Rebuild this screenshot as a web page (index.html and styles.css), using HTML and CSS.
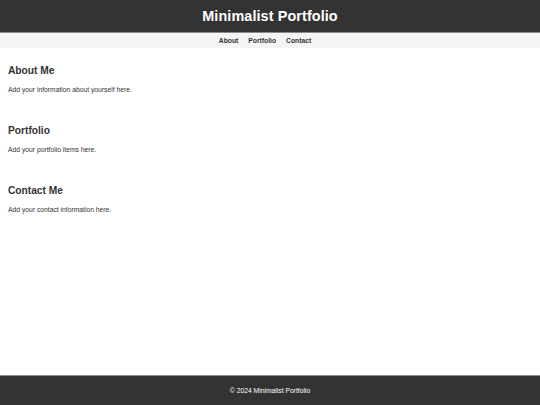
FILE: index.html
```html
<!DOCTYPE html>
<html lang="en">
<head>
<meta charset="utf-8">
<title>Minimalist Portfolio</title>
<link rel="stylesheet" href="styles.css">
</head>
<body>
<div class="page">
  <header class="site-header">
    <h1 class="site-title">Minimalist Portfolio</h1>
  </header>
  <nav class="site-nav">
    <a href="#about">About</a>
    <a href="#portfolio">Portfolio</a>
    <a href="#contact">Contact</a>
  </nav>
  <main class="content">
    <section class="block" id="about">
      <h2>About Me</h2>
      <p>Add your information about yourself here.</p>
    </section>
    <section class="block" id="portfolio">
      <h2>Portfolio</h2>
      <p>Add your portfolio items here.</p>
    </section>
    <section class="block" id="contact">
      <h2>Contact Me</h2>
      <p>Add your contact information here.</p>
    </section>
  </main>
  <footer class="site-footer">
    <p>&copy; 2024 Minimalist Portfolio</p>
  </footer>
</div>
</body>
</html>
```

FILE: styles.css
```css
html, body {
  margin: 0;
  padding: 0;
}
body {
  font-family: "Liberation Sans", Arial, sans-serif;
  color: #333;
  background: #fff;
}
.page {
  min-height: 100vh;
  display: flex;
  flex-direction: column;
}
.site-header {
  background: #333;
  color: #fff;
  height: 32px;
  display: flex;
  align-items: center;
  justify-content: center;
  border-bottom: 1px solid #8a8a8a;
}
.site-title {
  margin: 0;
  font-size: 14.4px;
  line-height: 17px;
  font-weight: bold;
  letter-spacing: 0.1px;
}
.site-nav {
  background: #f4f4f4;
  height: 15px;
  display: flex;
  align-items: center;
  justify-content: center;
}
.site-nav a {
  color: #333;
  text-decoration: none;
  font-weight: bold;
  font-size: 6.75px;
  line-height: 8px;
  margin-right: 10px;
}
.content {
  flex: 1;
  padding: 17px 8px 0;
}
.block {
  margin-bottom: 31px;
}
.block h2 {
  margin: 0 0 9px;
  font-size: 10.2px;
  line-height: 12px;
  font-weight: bold;
  color: #333;
}
.block p {
  margin: 0;
  font-size: 6.75px;
  line-height: 8px;
  color: #333;
}
.site-footer {
  background: #333;
  color: #fff;
  height: 29px;
  border-top: 1px solid #8a8a8a;
  display: flex;
  align-items: center;
  justify-content: center;
}
.site-footer p {
  margin: 0;
  font-size: 6.75px;
  line-height: 8px;
}
```
